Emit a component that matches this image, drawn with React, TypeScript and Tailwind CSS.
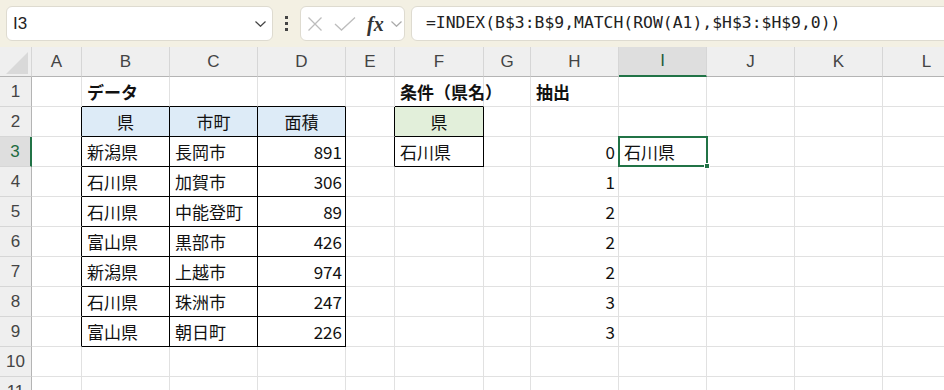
import React from 'react';

type Cell = {
    text?: string;
    bold?: boolean;
    align?: 'left' | 'center' | 'right';
    bg?: string;
    r?: boolean; // black right border
    b?: boolean; // black bottom border
};

const COLS = ['A', 'B', 'C', 'D', 'E', 'F', 'G', 'H', 'I', 'J', 'K', 'L'];

const data: [string, string, number][] = [
    ['新潟県', '長岡市', 891],
    ['石川県', '加賀市', 306],
    ['石川県', '中能登町', 89],
    ['富山県', '黒部市', 426],
    ['新潟県', '上越市', 974],
    ['石川県', '珠洲市', 247],
    ['富山県', '朝日町', 226],
];
const extracted = [0, 1, 2, 2, 2, 3, 3];

// build the sheet contents, keyed by "row-col"
const buildCells = () => {
    const cells: Record<string, Cell> = {};
    const set = (row: number, col: string, c: Cell) => {
        cells[`${row}-${col}`] = { ...cells[`${row}-${col}`], ...c };
    };

    set(1, 'B', { text: 'データ', bold: true });
    set(1, 'F', { text: '条件（県名）', bold: true });
    set(1, 'H', { text: '抽出', bold: true });

    // table B2:D9
    set(2, 'B', { text: '県', align: 'center', bg: 'bg-[#ddebf7]' });
    set(2, 'C', { text: '市町', align: 'center', bg: 'bg-[#ddebf7]' });
    set(2, 'D', { text: '面積', align: 'center', bg: 'bg-[#ddebf7]' });
    data.forEach(([pref, city, area], i) => {
        set(i + 3, 'B', { text: pref });
        set(i + 3, 'C', { text: city });
        set(i + 3, 'D', { text: String(area), align: 'right' });
        set(i + 3, 'H', { text: String(extracted[i]), align: 'right' });
    });
    for (let row = 2; row <= 9; row++) {
        set(row, 'A', { r: true });
        ['B', 'C', 'D'].forEach((c) => set(row, c, { r: true, b: true }));
    }
    ['B', 'C', 'D'].forEach((c) => set(1, c, { b: true }));

    // condition box F2:F3
    set(2, 'F', { text: '県', align: 'center', bg: 'bg-[#e2efda]', r: true, b: true });
    set(3, 'F', { text: '石川県', r: true, b: true });
    set(1, 'F', { b: true });
    set(2, 'E', { r: true });
    set(3, 'E', { r: true });

    set(3, 'I', { text: '石川県' });
    return cells;
};

const cells = buildCells();

const XIcon = () => (
    <svg width="16" height="14" viewBox="0 0 16 14" fill="none">
        <path d="M1.5 0.5 L14.5 13.5 M14.5 0.5 L1.5 13.5" stroke="#bdbdbd" strokeWidth="1.3" />
    </svg>
);

const CheckIcon = () => (
    <svg width="22" height="14" viewBox="0 0 22 14" fill="none">
        <path d="M1 7 L7.5 13 L21 0.5" stroke="#bdbdbd" strokeWidth="1.3" />
    </svg>
);

const Chevron = ({ color = '#444', w = 11 }: { color?: string; w?: number }) => (
    <svg width={w} height="6" viewBox="0 0 11 6" fill="none">
        <path d="M0.5 0.5 L5.5 5.3 L10.5 0.5" stroke={color} strokeWidth="1.2" />
    </svg>
);

const Toolbar = () => (
    <div className="flex items-center h-[47px] bg-[#f3f0e3] pl-[6px] overflow-hidden">
        <div className="flex items-center justify-between w-[267px] h-[35px] bg-white border border-[#dedbd0] rounded-[6px] pl-[6px] pr-[6px] shrink-0">
            <span className="text-[17px] text-[#222] font-['Liberation_Sans',sans-serif]">I3</span>
            <Chevron />
        </div>
        <div className="flex flex-col gap-[3px] ml-[12px] mr-[12px] shrink-0">
            <span className="block w-[3px] h-[3px] bg-[#444]" />
            <span className="block w-[3px] h-[3px] bg-[#444]" />
            <span className="block w-[3px] h-[3px] bg-[#444]" />
        </div>
        <div className="flex items-center w-[105px] h-[35px] bg-white border border-[#dedbd0] rounded-[6px] pl-[6px] shrink-0">
            <XIcon />
            <span className="ml-[11px]"><CheckIcon /></span>
            <span className="ml-[11px] text-[20px] leading-none italic font-bold text-[#333] font-['Liberation_Serif',serif]">fx</span>
            <span className="ml-[7px]"><Chevron color="#aaa" w={11} /></span>
        </div>
        <div className="flex items-center ml-[6px] w-[600px] h-[35px] bg-white border border-[#dedbd0] rounded-[6px] pl-[14px] shrink-0">
            <span className="text-[16.4px] text-[#222] font-['DejaVu_Sans_Mono',monospace]">
                =INDEX(B$3:B$9,MATCH(ROW(A1),$H$3:$H$9,0))
            </span>
        </div>
    </div>
);

const headerText = "text-[17px] font-['Liberation_Sans',sans-serif]";
const cellFont = "font-['Noto_Sans_CJK_JP',sans-serif] text-[17px] leading-none text-[#111]";

const Sheet = () => {
    const rows = Array.from({ length: 11 }, (_, i) => i + 1);
    return (
        <div className="grid grid-cols-[32px_50px_88px_88px_88px_49px_89px_47px_88px_88px_88px_88px_88px] bg-white">
            {/* corner */}
            <div className="relative h-[30px] bg-[#efefef] border-r border-b border-r-[#d6d6d6] border-b-[#b4b4b4]">
                <svg className="absolute left-[6px] top-[5px]" width="22" height="22" viewBox="0 0 22 22">
                    <polygon points="0,22 22,22 22,0" fill="#d9d9d9" />
                </svg>
            </div>
            {COLS.map((c) =>
                c === 'I' ? (
                    <div key={c} className={`h-[30px] flex items-center justify-center bg-[#dedede] border-r border-r-[#d6d6d6] border-b-2 border-b-[#217346] text-[#1e5c3a] ${headerText}`}>
                        {c}
                    </div>
                ) : (
                    <div key={c} className={`h-[30px] flex items-center justify-center bg-[#efefef] border-r border-r-[#d6d6d6] border-b border-b-[#b4b4b4] text-[#444] ${headerText}`}>
                        {c}
                    </div>
                )
            )}
            {rows.map((row) => (
                <React.Fragment key={row}>
                    {row === 3 ? (
                        <div className={`h-[30px] flex items-center justify-center bg-[#dedede] border-r-2 border-r-[#217346] border-b border-b-[#d6d6d6] text-[#1e6b40] ${headerText}`}>
                            {row}
                        </div>
                    ) : (
                        <div className={`h-[30px] flex items-center justify-center bg-[#efefef] border-r border-r-[#b4b4b4] border-b border-b-[#d6d6d6] text-[#444] ${headerText}`}>
                            {row}
                        </div>
                    )}
                    {COLS.map((col) => {
                        const cell = cells[`${row}-${col}`] || {};
                        const align =
                            cell.align === 'center' ? 'justify-center' : cell.align === 'right' ? 'justify-end pr-[3px]' : 'justify-start pl-[5px]';
                        return (
                            <div
                                key={col}
                                className={`relative h-[30px] flex items-center border-r border-b ${cell.r ? 'border-r-black' : 'border-r-[#e1e1e1]'} ${cell.b ? 'border-b-black' : 'border-b-[#e1e1e1]'} ${cell.bg || ''} ${align}`}
                            >
                                {cell.text && (
                                    <span className={`${cellFont} whitespace-nowrap ${cell.bold ? 'font-bold' : ''} relative z-10`}>{cell.text}</span>
                                )}
                                {row === 3 && col === 'I' && (
                                    <div className="absolute left-[-1px] top-[-1px] w-[90px] h-[31px] border-2 border-[#217346] z-20">
                                        <div className="absolute right-[-4px] bottom-[-4px] w-[6px] h-[6px] bg-[#217346] border border-white" />
                                    </div>
                                )}
                            </div>
                        );
                    })}
                </React.Fragment>
            ))}
        </div>
    );
};

export default function App() {
    return (
        <div className="w-[944px] h-[390px] overflow-hidden bg-white">
            <Toolbar />
            <Sheet />
        </div>
    );
}
